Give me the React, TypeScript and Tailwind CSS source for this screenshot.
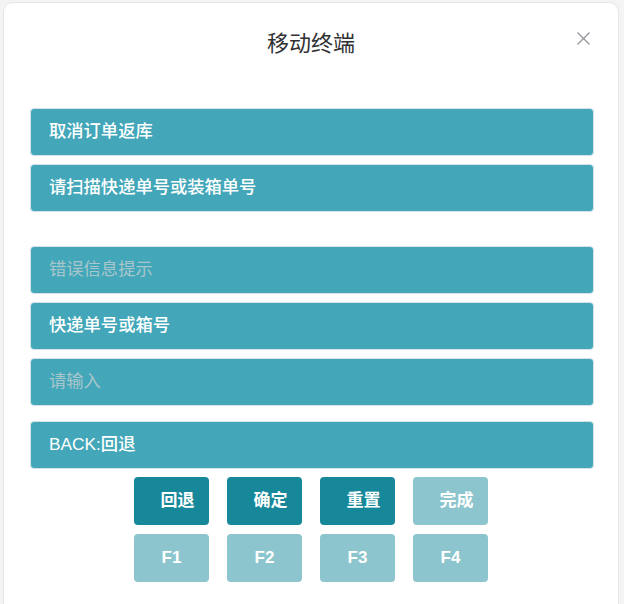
const rows = [
  { text: '取消订单返库', muted: false },
  { text: '请扫描快递单号或装箱单号', muted: false },
]

const fields = [
  { text: '错误信息提示', muted: true },
  { text: '快递单号或箱号', muted: false },
  { text: '请输入', muted: true },
]

function Row({ text, muted }: { text: string; muted: boolean }) {
  return (
    <div className="flex h-12 items-center rounded-[4px] border border-[#d6e3e6] bg-[#43a7b9] px-[18px]">
      <span
        className={
          muted
            ? 'text-[17.3px] font-normal text-[#a9c6cc]'
            : 'text-[17.3px] font-medium text-white'
        }
      >
        {text}
      </span>
    </div>
  )
}

export default function App() {
  return (
    <div
      className="h-[604px] overflow-hidden bg-[#f4f4f4] pt-[2px] pl-[3px]"
      style={{ fontFamily: '"Liberation Sans", "Noto Sans CJK SC", sans-serif' }}
    >
      <div className="h-[640px] w-[616px] rounded-[10px] border border-[#e6e6e6] bg-white">
        {/* Header */}
        <div className="relative flex h-[80px] items-center justify-center">
          <h2 className="text-[22px] font-normal text-[#303133]">移动终端</h2>
          <button className="absolute right-[28px] top-[29px] text-[#909399]" aria-label="close">
            <svg width="13" height="13" viewBox="0 0 13 13" fill="none" stroke="currentColor" strokeWidth="1.2">
              <path d="M0.5 0.5L12.5 12.5M12.5 0.5L0.5 12.5" />
            </svg>
          </button>
        </div>

        {/* Body */}
        <div className="pl-[26px] pr-[24px] pt-[25px]">
          <div className="flex flex-col gap-2">
            {rows.map((r) => (
              <Row key={r.text} {...r} />
            ))}
          </div>

          <div className="mt-[34px] flex flex-col gap-2">
            {fields.map((r) => (
              <Row key={r.text} {...r} />
            ))}
          </div>

          <div className="mt-[15px]">
            <Row text="BACK:回退" muted={false} />
          </div>

          <div className="mt-2 mr-[2px] grid grid-cols-[75px_75px_75px_75px] justify-center gap-x-[18px] gap-y-[9px]">
            <button className="h-12 rounded-[4px] bg-[#17889a] pl-3 text-[17px] font-bold text-white">回退</button>
            <button className="h-12 rounded-[4px] bg-[#17889a] pl-3 text-[17px] font-bold text-white">确定</button>
            <button className="h-12 rounded-[4px] bg-[#17889a] pl-3 text-[17px] font-bold text-white">重置</button>
            <button className="h-12 rounded-[4px] bg-[#8cc5cd] pl-3 text-[17px] font-bold text-white">完成</button>
            <button className="h-12 rounded-[4px] bg-[#8cc5cd] text-[17px] font-bold text-white">F1</button>
            <button className="h-12 rounded-[4px] bg-[#8cc5cd] text-[17px] font-bold text-white">F2</button>
            <button className="h-12 rounded-[4px] bg-[#8cc5cd] text-[17px] font-bold text-white">F3</button>
            <button className="h-12 rounded-[4px] bg-[#8cc5cd] text-[17px] font-bold text-white">F4</button>
          </div>
        </div>
      </div>
    </div>
  )
}
